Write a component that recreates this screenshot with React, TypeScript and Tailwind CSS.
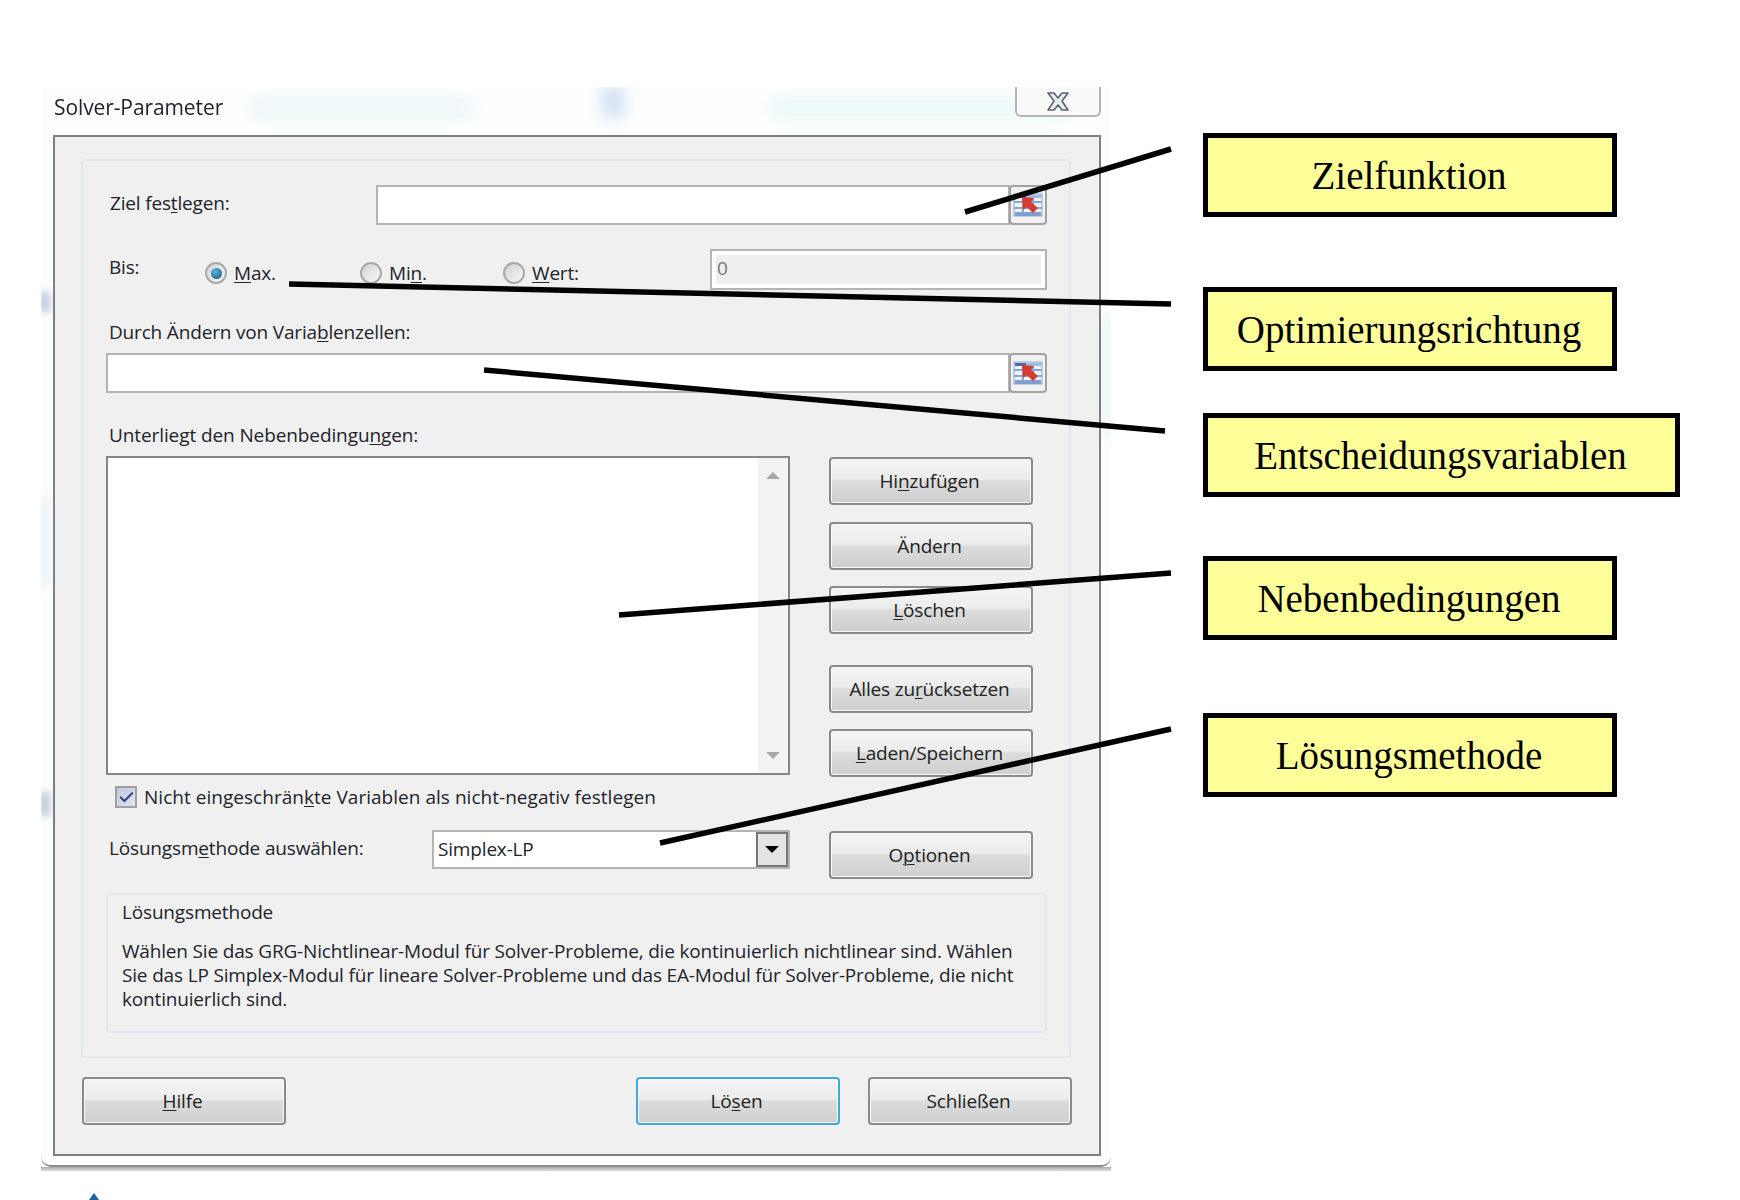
import React from "react";
import { Check } from "lucide-react";

const btnBase =
  "flex h-[48px] w-[204px] shrink-0 items-center justify-center rounded-[4px] border-2 bg-[linear-gradient(180deg,#f4f4f4_0%,#ececec_46%,#dcdcdc_50%,#cfcfcf_100%)] pr-[3px] text-[#222] shadow-[inset_0_0_0_1px_#f8f8f8]";
const btnClass = `${btnBase} border-[#8a8a8a]`;

const inputClass = "h-[40px] border-2 border-[#b4b4b4] bg-white";

function Key({ children }: { children: React.ReactNode }) {
  return <u className="underline decoration-1 underline-offset-2">{children}</u>;
}

function RangeButton() {
  return (
    <div className="-ml-[1px] flex h-[40px] w-[38px] shrink-0 items-center justify-center rounded-[4px] border-2 border-[#a2a2a2] bg-[#f2f2f2]">
      <svg width="30" height="28" viewBox="0 0 30 28">
        <rect x="1" y="3" width="28" height="22" fill="#eef3fa" stroke="#8aa5cf" />
        <rect x="2" y="4" width="11" height="3" fill="#4a6a9c" />
        <rect x="13" y="4" width="15" height="3" fill="#9fb9e0" />
        <path d="M1 11h28M1 17h28M10 7v18M20 7v18" stroke="#86a6d8" strokeWidth="2" />
        <rect x="2" y="21" width="26" height="4" fill="#7f9fd2" />
        <path d="M9 6l12 1-3 4 7 6-5 5-6-6-4 3z" fill="#d93a2e" />
      </svg>
    </div>
  );
}

function Radio({ on, x, label }: { on?: boolean; x: string; label: React.ReactNode }) {
  return (
    <div className={`flex items-center gap-[7px] pt-[10px] ${x}`}>
      <span className="flex h-[22px] w-[22px] items-center justify-center rounded-full border-2 border-[#a8a8a8] bg-[linear-gradient(135deg,#d0d0d0,#fafafa)]">
        {on ? (
          <span className="h-[11px] w-[11px] rounded-full bg-[radial-gradient(circle_at_40%_35%,#5fb4dd,#0f4f7d)]" />
        ) : null}
      </span>
      <span>{label}</span>
    </div>
  );
}

function Callout({ text, wide, className }: { text: string; wide?: boolean; className: string }) {
  return (
    <div
      className={`flex h-[84px] items-center justify-center border-[5px] border-black bg-[#ffff99] pt-[3px] pr-[2px] font-['Liberation_Serif',serif] text-[39px] text-black ${
        wide ? "w-[477px]" : "w-[414px]"
      } ${className}`}
    >
      {text}
    </div>
  );
}

export default function App() {
  return (
    <div className="relative flex h-[1200px] w-[1740px] items-start overflow-hidden bg-white">
      <div className="ml-[41px] mt-[87px] w-[1070px] shrink-0 blur-[0.5px]">
        <div className="relative h-[1080px] overflow-hidden rounded-b-[10px] border-b-2 border-[#8c8c8c] bg-[#fcfefe] font-['Open_Sans',sans-serif] text-[19px] tracking-[-0.17px] text-[#23232b]">
          {/* blurred desktop behind the glass frame */}
          <div className="absolute left-[210px] top-[14px] h-[14px] w-[220px] bg-[#e6f3f8] blur-[8px]" />
          <div className="absolute left-[560px] top-[0px] h-[30px] w-[24px] bg-[#d3e2f4] blur-[7px]" />
          <div className="absolute left-[730px] top-[14px] h-[14px] w-[300px] bg-[#e4f6f8] blur-[8px]" />
          <div className="absolute left-[0px] top-[205px] h-[20px] w-[8px] bg-[#aab8d2] blur-[4px]" />
          <div className="absolute left-[0px] top-[705px] h-[24px] w-[8px] bg-[#aab8d2] blur-[4px]" />
          <div className="absolute left-[0px] top-[410px] h-[90px] w-[8px] bg-[#e2f0f8] blur-[5px]" />
          <div className="absolute right-[0px] top-[230px] h-[120px] w-[8px] bg-[#e6f2f8] blur-[5px]" />

          <div className="relative flex h-[48px] items-start justify-between pl-[13px] pr-[10px]">
            <span className="pt-[5px] text-[21px] tracking-[-0.1px]">Solver-Parameter</span>
            <div className="flex h-[30px] w-[86px] items-center justify-center rounded-b-[6px] border-2 border-t-0 border-[#b5b5b5] bg-[#fafafa]">
              <svg width="24" height="19" viewBox="0 0 24 19">
                <path
                  d="M2 1h6l4 5 4-5h6l-6 8 6 9h-6l-4-5-4 5H2l6-9z"
                  fill="#e8ecf0"
                  stroke="#5a6470"
                  strokeWidth="1.6"
                  strokeLinejoin="round"
                />
              </svg>
            </div>
          </div>

          <div className="relative ml-[12px] mr-[10px] h-[1021px] border-2 border-[#7f7f7f] bg-[#f0f0f0] pl-[26px] pr-[26px] pt-[22px]">
            <div className="flex h-[899px] w-[990px] flex-col rounded-[4px] border-2 border-[#dfe7ec] pl-[23px] pr-[22px]">
              <div className="mt-[24px] flex h-[40px] items-start pl-[4px]">
                <span className="w-[266px] pt-[4px]">
                  Ziel fes<Key>t</Key>legen:
                </span>
                <div className={`flex-1 ${inputClass}`} />
                <RangeButton />
              </div>

              <div className="mt-[24px] flex h-[41px] items-start pl-[3px]">
                <span className="w-[96px] pt-[4px]">Bis:</span>
                <Radio on x="w-[155px]" label={<><Key>M</Key>ax.</>} />
                <Radio x="w-[143px]" label={<>Mi<Key>n</Key>.</>} />
                <Radio x="w-[207px]" label={<><Key>W</Key>ert:</>} />
                <div className="flex h-[41px] flex-1 items-center border-2 border-[#b4b4b4] bg-white p-[4px]">
                  <div className="flex h-full w-full items-center bg-[#efefef] pl-[1px] pb-[3px] text-[#777]">0</div>
                </div>
              </div>

              <div className="mt-[30px] h-[24px] pl-[3px] leading-[24px]">
                Durch Ändern von Varia<Key>b</Key>lenzellen:
              </div>
              <div className="mt-[9px] flex">
                <div className={`flex-1 ${inputClass}`} />
                <RangeButton />
              </div>

              <div className="mt-[30px] h-[24px] pl-[3px] leading-[24px] tracking-[-0.1px]">
                Unterliegt den Nebenbedingu<Key>n</Key>gen:
              </div>

              <div className="mt-[9px] flex gap-[39px]">
                <div className="w-[684px] shrink-0">
                  <div className="flex h-[319px] justify-end border-2 border-[#82878a] bg-white">
                    <div className="flex w-[30px] flex-col items-center justify-between bg-[#f3f3f3] py-[14px]">
                      <span className="h-0 w-0 border-x-[7px] border-b-[7px] border-x-transparent border-b-[#a8a8a8]" />
                      <span className="h-0 w-0 border-x-[7px] border-t-[7px] border-x-transparent border-t-[#a8a8a8]" />
                    </div>
                  </div>
                  <div className="mt-[10px] flex h-[24px] items-center gap-[7px] pl-[9px]">
                    <span className="flex h-[22px] w-[22px] items-center justify-center border-2 border-[#a0a0a0] bg-[linear-gradient(135deg,#bcc8de,#e2e6ee)]">
                      <Check size={17} strokeWidth={3} className="text-[#33478c]" />
                    </span>
                    <span className="tracking-[0.03px]">
                      Nicht eingeschrän<Key>k</Key>te Variablen als nicht-negativ festlegen
                    </span>
                  </div>
                  <div className="mt-[21px] flex h-[39px] items-start pl-[3px]">
                    <span className="w-[323px] pt-[4px]">
                      Lösungsm<Key>e</Key>thode auswählen:
                    </span>
                    <div className="flex h-[39px] flex-1 items-center justify-between border-2 border-[#b4b4b4] bg-white pl-[4px]">
                      <span>Simplex-LP</span>
                      <div className="flex h-full w-[32px] items-center justify-center border-2 border-[#777] bg-[#e4e4e4]">
                        <span className="h-0 w-0 border-x-[7px] border-t-[7px] border-x-transparent border-t-black" />
                      </div>
                    </div>
                  </div>
                </div>

                <div className="flex flex-col pt-[1px]">
                  <button className={btnClass}>
                    <span>Hi<Key>n</Key>zufügen</span>
                  </button>
                  <button className={`${btnClass} mt-[17px]`}>Ändern</button>
                  <button className={`${btnClass} mt-[16px]`}>
                    <span><Key>L</Key>öschen</span>
                  </button>
                  <button className={`${btnClass} mt-[31px]`}>
                    <span>Alles zu<Key>r</Key>ücksetzen</span>
                  </button>
                  <button className={`${btnClass} mt-[16px]`}>
                    <span><Key>L</Key>aden/Speichern</span>
                  </button>
                  <button className={`${btnClass} mt-[54px]`}>
                    <span>O<Key>p</Key>tionen</span>
                  </button>
                </div>
              </div>

              <div className="mt-[14px] h-[140px] rounded-[4px] border-2 border-[#dfe7ec] pl-[14px] pt-[5px] leading-[24px]">
                <div>Lösungsmethode</div>
                <div className="mt-[15px] w-[920px]">
                  Wählen Sie das GRG-Nichtlinear-Modul für Solver-Probleme, die kontinuierlich nichtlinear sind. Wählen
                  <br />
                  Sie das LP Simplex-Modul für lineare Solver-Probleme und das EA-Modul für Solver-Probleme, die nicht
                  <br />
                  kontinuierlich sind.
                </div>
              </div>
            </div>

            <div className="mt-[19px] flex gap-[28px] pl-[1px] pr-[1px]">
              <button className={`${btnClass} mr-auto`}>
                <span><Key>H</Key>ilfe</span>
              </button>
              <button className={`${btnBase} border-[#3fa9dc]`}>
                <span>Lö<Key>s</Key>en</span>
              </button>
              <button className={btnClass}>
                <span>Schließen</span>
              </button>
            </div>
          </div>
        </div>
        <div className="h-[4px] bg-[linear-gradient(180deg,#a8a8a8,#dddddd)]" />
      </div>

      <div className="ml-[92px] mt-[133px] flex flex-col">
        <Callout text="Zielfunktion" className="" />
        <Callout text="Optimierungsrichtung" className="mt-[70px]" />
        <Callout text="Entscheidungsvariablen" wide className="mt-[42px]" />
        <Callout text="Nebenbedingungen" className="mt-[59px]" />
        <Callout text="Lösungsmethode" className="mt-[73px]" />
      </div>

      {/* leader lines drawn over the dialog */}
      <svg className="absolute left-0 top-0" width="1740" height="1200" viewBox="0 0 1740 1200">
        <g stroke="#000" strokeWidth="5.5" fill="none">
          <path d="M965 212L1171 149" />
          <path d="M289 284L1171 304" />
          <path d="M484 370L1165 431" />
          <path d="M619 615L1171 573" />
          <path d="M660 843L1171 729" />
        </g>
        <path d="M89 1200L94 1193L99 1200z" fill="#1f5f9e" />
      </svg>
    </div>
  );
}
